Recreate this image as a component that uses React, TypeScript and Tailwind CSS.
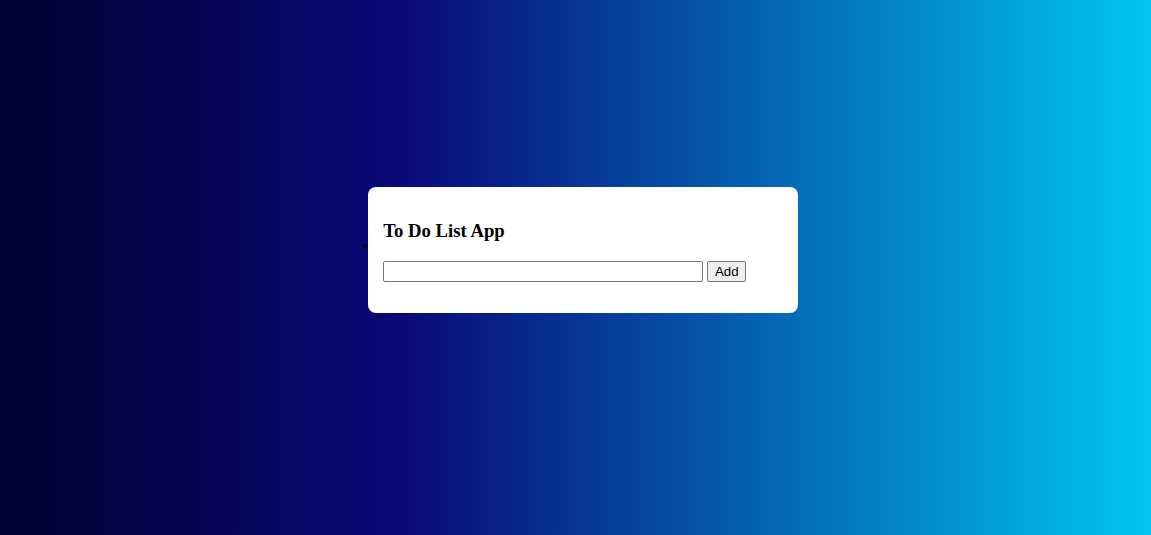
export default function App() {
  return (
    <div className="flex h-[535px] w-full items-center justify-center bg-[linear-gradient(90deg,#020030_0%,#090979_35%,#00c6f2_100%)] pb-[35px] pl-[9px] font-['Liberation_Serif',serif]">
      <span className="text-[16px] leading-[18px] text-black">"</span>
      <div className="w-[430px] rounded-[8px] bg-white px-[15px] pt-[14px] pb-[15px]">
        <h3 className="mt-[18.72px] mb-[19.72px] text-[18.72px] leading-[21.5px] font-bold text-black">
          To Do List App
        </h3>
        <div className="flex items-center gap-[4px]">
          <input
            type="text"
            className="h-[21px] w-[320px] rounded-[2px] border border-[#767676] bg-white px-[2px] text-[13.33px] font-['Liberation_Sans',sans-serif] outline-none"
          />
          <button
            type="button"
            className="h-[21px] w-[39px] rounded-[2px] border border-[#767676] bg-[#efefef] text-center text-[13.33px] leading-none text-black font-['Liberation_Sans',sans-serif]"
          >
            Add
          </button>
        </div>
        <ul className="my-[16px]" />
      </div>
    </div>
  );
}
